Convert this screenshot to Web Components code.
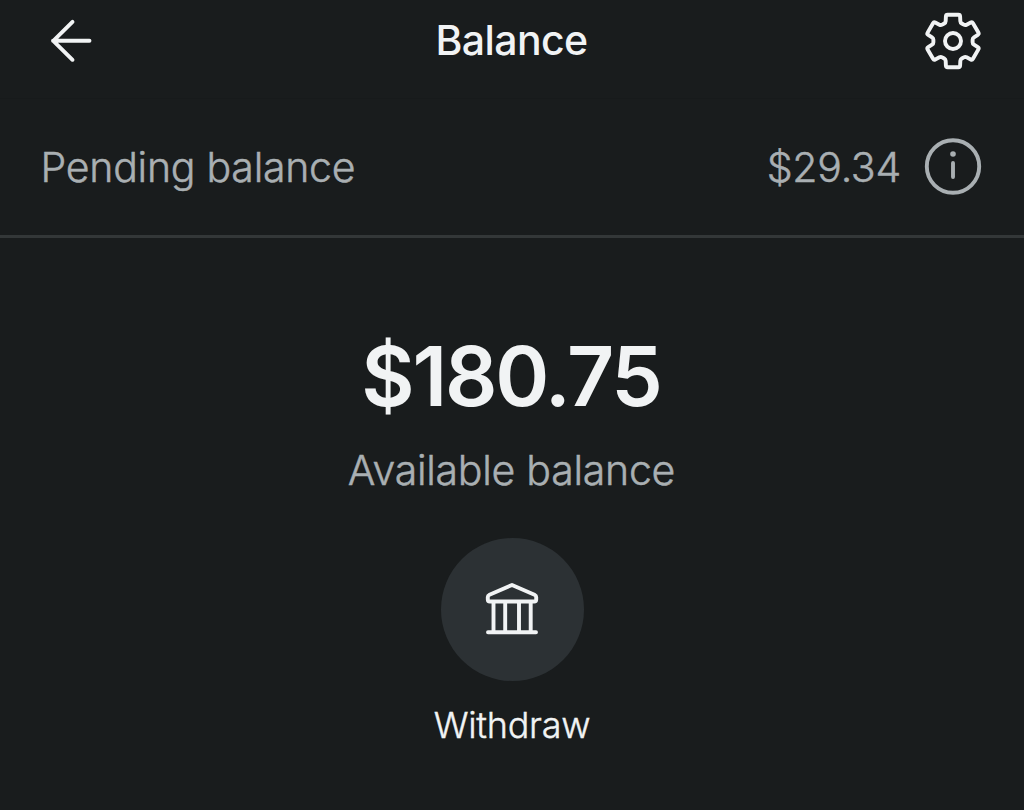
<!DOCTYPE html>
<html lang="en">
<head>
<meta charset="utf-8">
<title>Balance</title>
<style>
  body {
    margin: 0;
    background: #191c1d;
    color: #f1f3f4;
    font-family: Inter, "Liberation Sans", sans-serif;
    --muted: #a9afb2;
    --line: #333738;
    --surface: #2c3134;
  }
</style>
</head>
<body>
<balance-page>
  <app-header slot="header">
    <ui-icon slot="start" name="back"></ui-icon>
    Balance
    <ui-icon slot="end" name="gear"></ui-icon>
  </app-header>
  <pending-row slot="pending" amount="$29.34">Pending balance</pending-row>
  <balance-total amount="$180.75">Available balance</balance-total>
  <round-action icon="bank">Withdraw</round-action>
</balance-page>

<script>
// six-tooth cog outline centred on 30,30 with rounded corners
function gearPath() {
  const spokes = [];
  for (let i = 0; i < 6; i++) {
    [[-22, 19.8], [-15, 27.1], [15, 27.1], [22, 19.8]].forEach(([deg, r]) => {
      const a = (i * 60 + deg) * Math.PI / 180;
      spokes.push([30 + r * Math.sin(a), 30 - r * Math.cos(a)]);
    });
  }
  const toward = (a, b, d) => {
    const k = d / Math.hypot(b[0] - a[0], b[1] - a[1]);
    return `${(a[0] + (b[0] - a[0]) * k).toFixed(2)} ${(a[1] + (b[1] - a[1]) * k).toFixed(2)}`;
  };
  return spokes.map((p, i) => {
    const prev = spokes[(i + 23) % 24];
    const next = spokes[(i + 1) % 24];
    return `${i ? 'L' : 'M'}${toward(p, prev, 1.6)}Q${p[0].toFixed(2)} ${p[1].toFixed(2)} ${toward(p, next, 1.6)}`;
  }).join('') + 'Z';
}

const ICONS = {
  back: '<path d="M59.500 29.800H23M42.500 10.800L23.300 29.800L42.500 48.800"/>',
  gear: `<path d="${gearPath()}"/><circle cx="30" cy="30" r="8"/>`,
  info: '<circle cx="30" cy="29.500" r="26.200"/><path d="M30 26V40"/><circle cx="30" cy="17" r="2.800" fill="currentColor" stroke="none"/>',
  bank: '<path d="M30 5L52.500 14.800Q54.200 15.600 54.200 17V19.500Q54.200 21.500 52.200 21.500H7.800Q5.800 21.500 5.800 19.500V17Q5.800 15.600 7.500 14.800ZM11.500 21.500V52M23.200 21.500V52M37 21.500V52M48.700 21.500V52M6 52.300H54"/>'
};

class UiIcon extends HTMLElement {
  constructor() {
    super();
    this.attachShadow({ mode: 'open' });
  }

  connectedCallback() {
    this.shadowRoot.innerHTML = `
      <style>
        :host {
          display: block;
          width: 60px;
          height: 60px;
          flex: none;
        }
        svg {
          display: block;
          overflow: visible;
        }
      </style>
      <svg width="60" height="60" viewBox="0 0 60 60" fill="none" stroke="currentColor"
        stroke-width="3.9" stroke-linecap="round" stroke-linejoin="round">${ICONS[this.getAttribute('name')] || ''}</svg>
    `;
  }
}

class AppHeader extends HTMLElement {
  constructor() {
    super();
    this.attachShadow({ mode: 'open' });
    this.shadowRoot.innerHTML = `
      <style>
        :host {
          display: grid;
          grid-template-columns: 60px 1fr 60px;
          align-items: center;
          box-sizing: border-box;
          height: 99px;
          padding: 0 41.500px 17px 30px;
          border-bottom: 1px solid #171a1b;
        }
        h1 {
          margin: 0;
          padding: 0 0 2px 10.500px;
          font-size: 41px;
          line-height: 50px;
          font-weight: 500;
          letter-spacing: -0.6px;
          text-align: center;
        }
      </style>
      <slot name="start"></slot>
      <h1><slot></slot></h1>
      <slot name="end"></slot>
    `;
  }
}

class PendingRow extends HTMLElement {
  constructor() {
    super();
    this.attachShadow({ mode: 'open' });
  }

  connectedCallback() {
    this.shadowRoot.innerHTML = `
      <style>
        :host {
          display: flex;
          align-items: center;
          box-sizing: border-box;
          height: 139px;
          padding: 0 41.500px 1px 40.500px;
          border-bottom: 3px solid var(--line);
          color: var(--muted);
          font-size: 41px;
          line-height: 50px;
          font-weight: 300;
          letter-spacing: -0.25px;
          -webkit-text-stroke: 0.5px;
        }
        .label {
          flex: 1;
        }
        .amount {
          margin-right: 21.500px;
        }
      </style>
      <span class="label"><slot></slot></span>
      <span class="amount">${this.getAttribute('amount')}</span>
      <ui-icon name="info"></ui-icon>
    `;
  }
}

class BalanceTotal extends HTMLElement {
  constructor() {
    super();
    this.attachShadow({ mode: 'open' });
  }

  connectedCallback() {
    this.shadowRoot.innerHTML = `
      <style>
        :host {
          display: block;
          text-align: center;
        }
        .amount {
          padding-right: 2px;
          font-size: 82px;
          line-height: 100px;
          font-weight: 600;
          letter-spacing: -2.2px;
        }
        .label {
          margin-top: 18px;
          padding-right: 1px;
          color: var(--muted);
          font-size: 41px;
          line-height: 50px;
          font-weight: 300;
          letter-spacing: -0.25px;
          -webkit-text-stroke: 0.5px;
        }
      </style>
      <div class="amount">${this.getAttribute('amount')}</div>
      <div class="label"><slot></slot></div>
    `;
  }
}

class RoundAction extends HTMLElement {
  constructor() {
    super();
    this.attachShadow({ mode: 'open' });
  }

  connectedCallback() {
    this.shadowRoot.innerHTML = `
      <style>
        :host {
          display: flex;
          flex-direction: column;
          align-items: center;
          gap: 22px;
          font-size: 36px;
          line-height: 44px;
          font-weight: 300;
          letter-spacing: -0.3px;
          -webkit-text-stroke: 0.4px;
        }
        .disc {
          display: grid;
          place-items: center;
          width: 143px;
          height: 143px;
          border-radius: 50%;
          background: var(--surface);
        }
      </style>
      <div class="disc"><ui-icon name="${this.getAttribute('icon')}"></ui-icon></div>
      <span><slot></slot></span>
    `;
  }
}

class BalancePage extends HTMLElement {
  constructor() {
    super();
    this.attachShadow({ mode: 'open' });
    this.shadowRoot.innerHTML = `
      <style>
        :host {
          display: block;
          height: 810px;
          overflow: hidden;
        }
        main {
          display: flex;
          flex-direction: column;
          gap: 43px;
          padding-top: 89px;
        }
      </style>
      <slot name="header"></slot>
      <slot name="pending"></slot>
      <main><slot></slot></main>
    `;
  }
}

customElements.define('ui-icon', UiIcon);
customElements.define('app-header', AppHeader);
customElements.define('pending-row', PendingRow);
customElements.define('balance-total', BalanceTotal);
customElements.define('round-action', RoundAction);
customElements.define('balance-page', BalancePage);
</script>
</body>
</html>
